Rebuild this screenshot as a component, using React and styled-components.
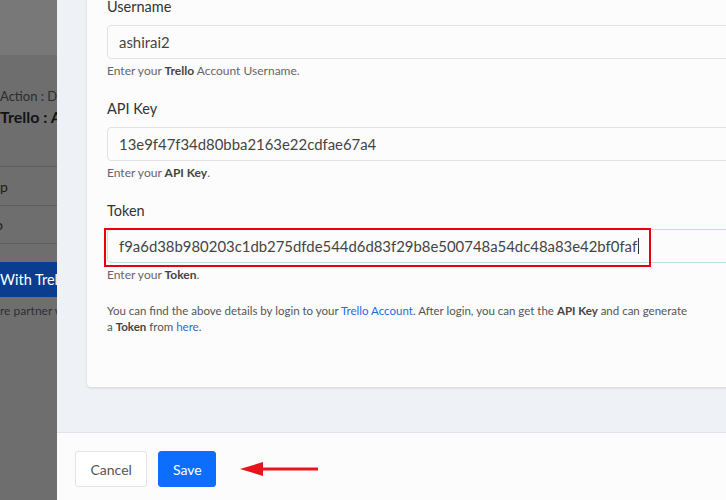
import React from "react";
import styled, { createGlobalStyle } from "styled-components";

const GlobalStyle = createGlobalStyle`
  html, body { margin: 0; padding: 0; overflow: hidden; background: #eef1f6; }
  body { font-family: Lato, "Open Sans", sans-serif; }
  * { box-sizing: border-box; }
`;

const Screen = styled.div`
  display: grid;
  grid-template-columns: 57px 1fr;
  width: 726px;
  height: 500px;
  overflow: hidden;
`;

const Backdrop = styled.div`
  background: #6e6e6e;
  overflow: hidden;
  display: flex;
  flex-direction: column;
  white-space: nowrap;
`;

const TopBand = styled.div`
  height: 55px;
  flex: none;
  background: #787878;
`;

const BackTitle = styled.div`
  padding-top: 33px;
  display: flex;
  flex-direction: column;
  gap: 3px;
`;

const BackSmall = styled.div`
  font-size: 13px;
  line-height: 16px;
  color: #2c2c2c;
`;

const BackBig = styled.div`
  font-size: 16px;
  line-height: 20px;
  font-weight: 700;
  color: #141414;
`;

const BackList = styled.div`
  margin-top: 39px;
  border-top: 1px solid #5e5e5e;
`;

const BackRow = styled.div`
  height: ${(p) => p.$h}px;
  flex: none;
  border-bottom: 1px solid #5e5e5e;
  display: flex;
  align-items: center;
  font-size: 14px;
  color: #1c1c1c;
  text-indent: ${(p) => p.$indent || 0}px;
`;

const BackBlue = styled.div`
  margin-top: 18px;
  height: 35px;
  flex: none;
  background: #0b3d8f;
  color: #ffffff;
  font-size: 14.5px;
  display: flex;
  align-items: center;
`;

const BackNote = styled.div`
  margin-top: 6px;
  font-size: 12px;
  color: #2e2e2e;
`;

const Panel = styled.div`
  display: flex;
  flex-direction: column;
  min-width: 0;
  overflow: hidden;
`;

const Body = styled.div`
  height: 432px;
  flex: none;
  background: #eef1f6;
  padding-left: 30px;
  overflow: hidden;
`;

const Card = styled.div`
  width: 690px;
  margin-top: -20px;
  background: #fcfcfc;
  border-radius: 4px;
  box-shadow: 0 1px 3px rgba(0, 0, 0, 0.12);
  padding: 20px 20px 52px 20px;
`;

const Field = styled.div`
  display: flex;
  flex-direction: column;
  margin-bottom: 24px;
`;

const Label = styled.div`
  font-size: 14.5px;
  line-height: 14px;
  color: #333;
  margin-bottom: 11px;
`;

const InputWrap = styled.div`
  position: relative;
`;

const Input = styled.div`
  height: 34px;
  border: 1px solid ${(p) => (p.$focus ? "#bfe0e4" : "#e2e2e2")};
  border-radius: 4px;
  background: #fcfcfc;
  padding: 0 11px;
  display: flex;
  align-items: center;
  font-size: 14.9px;
  color: #444;
  white-space: nowrap;
`;

const Caret = styled.span`
  display: inline-block;
  width: 1px;
  height: 16px;
  background: #333;
  margin-left: 1px;
`;

const Highlight = styled.div`
  position: absolute;
  left: -3px;
  top: -1px;
  width: 547px;
  height: 39px;
  border: 2.5px solid #e8000b;
  pointer-events: none;
`;

const Help = styled.div`
  margin-top: 5px;
  font-size: 12px;
  line-height: 14px;
  color: #666;
`;

const Strong = styled.b`
  font-weight: 700;
  color: #444;
`;

const Note = styled.p`
  margin: -3px 0 0 0;
  font-size: 11.5px;
  line-height: 16px;
  color: #555;
  width: 620px;
`;

const Link = styled.a`
  color: #1a6fd6;
  text-decoration: none;
`;

const Footer = styled.div`
  flex: 1;
  border-top: 1px solid #dfe3ea;
  background: #fcfcfc;
  padding: 18px 0 0 18px;
  display: flex;
  align-items: flex-start;
  gap: 11px;
`;

const Button = styled.button`
  height: 36px;
  padding: 0 ${(p) => (p.$primary ? 13.5 : 14.5)}px;
  border-radius: 3px;
  border: 1px solid ${(p) => (p.$primary ? "#0d6efd" : "#e3e3e3")};
  background: ${(p) => (p.$primary ? "#0d6efd" : "#ffffff")};
  color: ${(p) => (p.$primary ? "#ffffff" : "#555")};
  font-family: Lato, "Open Sans", sans-serif;
  font-size: 14px;
`;

const Arrow = styled.svg`
  margin-left: 13px;
  margin-top: 10px;
`;

export default function App() {
  return (
    <>
      <GlobalStyle />
      <Screen>
        <Backdrop>
          <TopBand />
          <BackTitle>
            <BackSmall>Action : Do</BackSmall>
            <BackBig>Trello : Ad</BackBig>
          </BackTitle>
          <BackList>
            <BackRow $h={39}>p</BackRow>
            <BackRow $h={38} $indent={-5}>o</BackRow>
          </BackList>
          <BackBlue>With Trello</BackBlue>
          <BackNote>re partner w</BackNote>
        </Backdrop>
        <Panel>
          <Body>
            <Card>
              <Field>
                <Label>Username</Label>
                <Input>ashirai2</Input>
                <Help>
                  Enter your <Strong>Trello</Strong> Account Username.
                </Help>
              </Field>
              <Field>
                <Label>API Key</Label>
                <Input>13e9f47f34d80bba2163e22cdfae67a4</Input>
                <Help>
                  Enter your <Strong>API Key</Strong>.
                </Help>
              </Field>
              <Field>
                <Label>Token</Label>
                <InputWrap>
                  <Input $focus>
                    f9a6d38b980203c1db275dfde544d6d83f29b8e500748a54dc48a83e42bf0faf
                    <Caret />
                  </Input>
                  <Highlight />
                </InputWrap>
                <Help>
                  Enter your <Strong>Token</Strong>.
                </Help>
              </Field>
              <Note>
                You can find the above details by login to your{" "}
                <Link>Trello Account</Link>. After login, you can get the{" "}
                <Strong>API Key</Strong> and can generate
                <br />a <Strong>Token</Strong> from <Link>here</Link>.
              </Note>
            </Card>
          </Body>
          <Footer>
            <Button>Cancel</Button>
            <Button $primary>Save</Button>
            <Arrow width="80" height="16" viewBox="0 0 80 16">
              <polygon points="0,8 23,1 23,15" fill="#e8141b" />
              <rect x="20" y="6.5" width="58" height="3" fill="#e8141b" />
            </Arrow>
          </Footer>
        </Panel>
      </Screen>
    </>
  );
}
